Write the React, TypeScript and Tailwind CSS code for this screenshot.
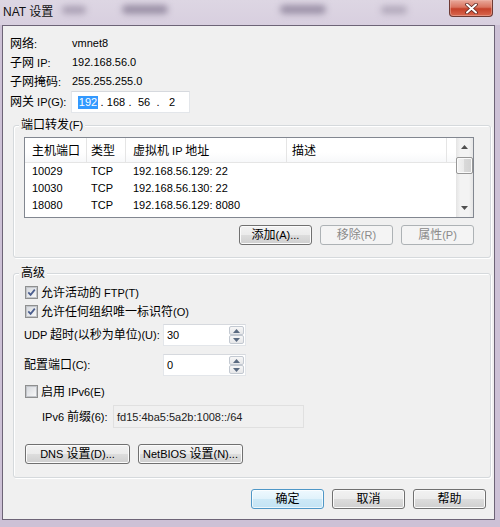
import React from "react";

const CJK = /([\u2E80-\u9FFF\uF900-\uFAFF\uFF00-\uFFEF\u3000-\u303F]+)/;

function T({ t }: { t: string }) {
  const parts = t.split(CJK);
  return (
    <span className="whitespace-pre">
      {parts.map((p, i) =>
        p === "" ? null : CJK.test(p) ? (
          <span key={i} className="text-[12px]">
            {p}
          </span>
        ) : (
          <span key={i}>{p}</span>
        )
      )}
    </span>
  );
}

function Btn({
  label,
  w = "w-[73px]",
  disabled = false,
  primary = false,
}: {
  label: string;
  w?: string;
  disabled?: boolean;
  primary?: boolean;
}) {
  const look = disabled
    ? "border-[#adb2b5] bg-[#f4f4f4] text-[#8a8a8a]"
    : primary
    ? "border-[#4f97c7] bg-[linear-gradient(#eff9fe_0%,#e0f2fb_50%,#cde9f7_50%,#c3e3f4_100%)] shadow-[inset_0_0_0_1px_#ffffffb0]"
    : "border-[#707070] bg-[linear-gradient(#f2f2f2_0%,#ebebeb_50%,#dddddd_50%,#cfcfcf_100%)] shadow-[inset_0_0_0_1px_#fbfbfb]";
  return (
    <div className={`${w} h-[20px] shrink-0 rounded-[3px] border flex items-center justify-center ${look}`}>
      <T t={label} />
    </div>
  );
}

function Check({ checked }: { checked: boolean }) {
  return (
    <span className="w-[13px] h-[13px] shrink-0 border border-[#8e8f8f] bg-[#f4f4f4] flex items-center justify-center">
      <span className="w-[11px] h-[11px] border border-[#c2c5ca] bg-[linear-gradient(135deg,#d7dadf,#f7f7f7)] flex items-center justify-center">
        {checked && (
          <svg width="9" height="9" viewBox="0 0 9 9">
            <path d="M1.3 4.4 L3.6 6.9 L7.8 1.6" fill="none" stroke="#4b5e8e" strokeWidth="1.7" />
          </svg>
        )}
      </span>
    </span>
  );
}

function Arrow({ up, color = "#4d4d4d" }: { up: boolean; color?: string }) {
  return (
    <svg width="7" height="4" viewBox="0 0 7 4">
      {up ? <path d="M0 4 L3.5 0 L7 4 Z" fill={color} /> : <path d="M0 0 L3.5 4 L7 0 Z" fill={color} />}
    </svg>
  );
}

function Spin() {
  return (
    <div className="w-[16px] h-full flex flex-col py-[1px] pr-[1px]">
      <div className="flex-1 border border-[#c3c9d1] rounded-[2px] bg-[linear-gradient(#f7f7f7,#e6e7e9)] flex items-center justify-center">
        <Arrow up color="#5a6a80" />
      </div>
      <div className="flex-1 border border-[#c3c9d1] rounded-[2px] bg-[linear-gradient(#f7f7f7,#e6e7e9)] flex items-center justify-center">
        <Arrow up={false} color="#5a6a80" />
      </div>
    </div>
  );
}

function Group({ title, h, children }: { title: string; h: string; children: React.ReactNode }) {
  return (
    <div
      className={`relative ml-[10px] w-[478px] ${h} border border-[#d5d9dc] rounded-[3px] shadow-[inset_1px_1px_0_#ffffff,1px_1px_0_#ffffff] flex flex-col`}
    >
      <div className="absolute left-[5px] top-[-9px] h-[16px] px-[2px] bg-[#f0f0f0] flex items-center">
        <T t={title} />
      </div>
      {children}
    </div>
  );
}

const cols = [
  { w: "w-[62px]", pl: "pl-[7px]" },
  { w: "w-[39px]", pl: "pl-[4px]" },
  { w: "w-[161px]", pl: "pl-[7px]" },
  { w: "w-[160px]", pl: "pl-[5px]" },
];

const rows = [
  ["10029", "TCP", "192.168.56.129: 22", ""],
  ["10030", "TCP", "192.168.56.130: 22", ""],
  ["18080", "TCP", "192.168.56.129: 8080", ""],
];

export default function App() {
  const headers = ["主机端口", "类型", "虚拟机 IP 地址", "描述"];
  return (
    <div className="w-[500px] h-[527px] overflow-hidden bg-[#cdc1d6] flex flex-col font-['Liberation_Sans','Noto_Sans_CJK_SC',sans-serif] text-[11px] text-black">
      {/* title bar */}
      <div className="h-[25px] shrink-0 flex items-start bg-[linear-gradient(#ddd6e3,#d8cfdf)]">
        <div className="pl-[3px] h-[24px] flex items-center text-[12px] text-[#111]">
          <span className="whitespace-pre">NAT </span>
          <span>设置</span>
        </div>
        <div className="ml-[9px] mt-[6px] w-[24px] h-[8px] rounded-full bg-[#aaa0b4] blur-[3px]" />
        <div className="ml-[36px] mt-[5px] w-[46px] h-[9px] rounded-full bg-[#9a90a6] blur-[3px]" />
        <div className="ml-[112px] mt-[5px] w-[46px] h-[9px] rounded-full bg-[#9c92a8] blur-[3px]" />
        <div className="ml-[55px] mt-[6px] w-[26px] h-[8px] rounded-full bg-[#b2a9bb] blur-[3px]" />
        <div className="ml-auto mr-[7px] w-[44px] h-[17px] rounded-b-[4px] border border-t-0 border-[#6e3a34] bg-[linear-gradient(#e9a99c_0%,#d9735f_45%,#c5412a_55%,#d9674f_100%)] flex items-center justify-center shadow-[inset_0_0_0_1px_#f0b8ac80]">
          <svg width="13" height="11" viewBox="0 0 13 11">
            <path d="M2 1.5 L11 9.5 M11 1.5 L2 9.5" stroke="#5a2520" strokeWidth="3.6" strokeLinecap="round" />
            <path d="M2 1.5 L11 9.5 M11 1.5 L2 9.5" stroke="#ffffff" strokeWidth="2" strokeLinecap="round" />
          </svg>
        </div>
      </div>

      {/* content */}
      <div className="ml-[2px] w-[493px] h-[495px] shrink-0 border border-[#6d6477] bg-[#f0f0f0] flex flex-col">
        <div className="pt-[8px] pl-[7px] flex flex-col">
          <div className="h-[19px] flex items-center">
            <span className="w-[62px]"><T t="网络:" /></span>
            <span>vmnet8</span>
          </div>
          <div className="h-[19px] flex items-center">
            <span className="w-[62px]"><T t="子网 IP:" /></span>
            <span>192.168.56.0</span>
          </div>
          <div className="h-[19px] flex items-center">
            <span className="w-[62px]"><T t="子网掩码:" /></span>
            <span>255.255.255.0</span>
          </div>
          <div className="h-[22px] flex items-center">
            <span className="w-[61px]"><T t="网关 IP(G):" /></span>
            <div className="w-[119px] h-[22px] border border-[#e3e6ea] border-t-[#d6d9de] bg-white flex items-center pl-[5px]">
              <span className="w-[22px] flex justify-center">
                <span className="bg-[#3399ff] text-white px-[1px] leading-[13px]">192</span>
              </span>
              <span className="w-[6px] flex justify-center">.</span>
              <span className="w-[22px] flex justify-center">168</span>
              <span className="w-[6px] flex justify-center">.</span>
              <span className="w-[22px] flex justify-center">56</span>
              <span className="w-[6px] flex justify-center">.</span>
              <span className="w-[22px] flex justify-center">2</span>
            </div>
          </div>
        </div>

        {/* port forwarding */}
        <div className="mt-[12px]">
          <Group title="端口转发(F)" h="h-[133px]">
            <div className="pt-[11px] pl-[10px] flex flex-col">
              <div className="w-[450px] h-[81px] border border-[#828790] bg-white flex">
                <div className="flex-1 flex flex-col">
                  <div className="h-[25px] border-b border-[#e5e5e5] flex bg-[linear-gradient(#ffffff,#ffffff_60%,#f7f8fa)]">
                    {headers.map((h, i) => (
                      <div key={i} className={`${cols[i].w} ${cols[i].pl} h-full border-r border-[#e5e5e5] flex items-center pt-[1px]`}>
                        <T t={h} />
                      </div>
                    ))}
                    <div className="flex-1" />
                  </div>
                  {rows.map((r, ri) => (
                    <div key={ri} className="h-[17px] flex items-center">
                      {r.map((c, ci) => (
                        <div key={ci} className={`${cols[ci].w} ${cols[ci].pl} whitespace-pre`}>
                          {c}
                        </div>
                      ))}
                    </div>
                  ))}
                </div>
                <div className="w-[17px] h-full flex flex-col bg-[linear-gradient(90deg,#e4e4e4,#f3f3f3_25%,#f3f3f3_75%,#e6e6e6)]">
                  <div className="h-[18px] flex items-center justify-center">
                    <Arrow up color="#505050" />
                  </div>
                  <div className="h-[17px] mt-[1px] mx-[0px] border border-[#979797] rounded-[2px] bg-[linear-gradient(90deg,#f3f3f3,#e9e9e9_50%,#d9d9d9_50%,#d2d2d2)] shadow-[inset_0_0_0_1px_#fbfbfb]" />
                  <div className="flex-1" />
                  <div className="h-[18px] flex items-center justify-center">
                    <Arrow up={false} color="#505050" />
                  </div>
                </div>
              </div>
              <div className="w-[450px] mt-[7px] flex justify-end gap-[8px]">
                <Btn label="添加(A)..." />
                <Btn label="移除(R)" disabled />
                <Btn label="属性(P)" disabled />
              </div>
            </div>
          </Group>
        </div>

        {/* advanced */}
        <div className="mt-[15px]">
          <Group title="高级" h="h-[205px]">
            <div className="pt-[9px] pl-[10px] flex flex-col">
              <div className="h-[19px] flex items-center pl-[1px] gap-[3px]">
                <Check checked />
                <T t="允许活动的 FTP(T)" />
              </div>
              <div className="h-[19px] flex items-center pl-[1px] gap-[3px]">
                <Check checked />
                <T t="允许任何组织唯一标识符(O)" />
              </div>
              <div className="mt-[3px] h-[22px] flex items-center">
                <span className="w-[139px]"><T t="UDP 超时(以秒为单位)(U):" /></span>
                <div className="w-[83px] h-[22px] border border-[#e3e6ea] border-t-[#d6d9de] bg-white flex items-center">
                  <span className="flex-1 pl-[3px]">30</span>
                  <Spin />
                </div>
              </div>
              <div className="mt-[8px] h-[22px] flex items-center">
                <span className="w-[139px]"><T t="配置端口(C):" /></span>
                <div className="w-[83px] h-[22px] border border-[#e3e6ea] border-t-[#d6d9de] bg-white flex items-center">
                  <span className="flex-1 pl-[3px]">0</span>
                  <Spin />
                </div>
              </div>
              <div className="mt-[6px] h-[19px] flex items-center pl-[1px] gap-[3px]">
                <Check checked={false} />
                <T t="启用 IPv6(E)" />
              </div>
              <div className="mt-[4px] h-[23px] flex items-center pl-[18px]">
                <span className="w-[71px]"><T t="IPv6 前缀(6):" /></span>
                <div className="w-[191px] h-[23px] border border-[#e0e0e0] bg-[#f0f0f0] flex items-start pt-[3px] pl-[3px] text-[#222]">
                  fd15:4ba5:5a2b:1008::/64
                </div>
              </div>
              <div className="mt-[16px] flex gap-[8px] pl-[1px]">
                <Btn label="DNS 设置(D)..." w="w-[105px]" />
                <Btn label="NetBIOS 设置(N)..." w="w-[105px]" />
              </div>
            </div>
          </Group>
        </div>

        <div className="mt-[11px] pr-[8px] flex justify-end gap-[8px]">
          <Btn label="确定" primary />
          <Btn label="取消" />
          <Btn label="帮助" />
        </div>
      </div>
    </div>
  );
}
